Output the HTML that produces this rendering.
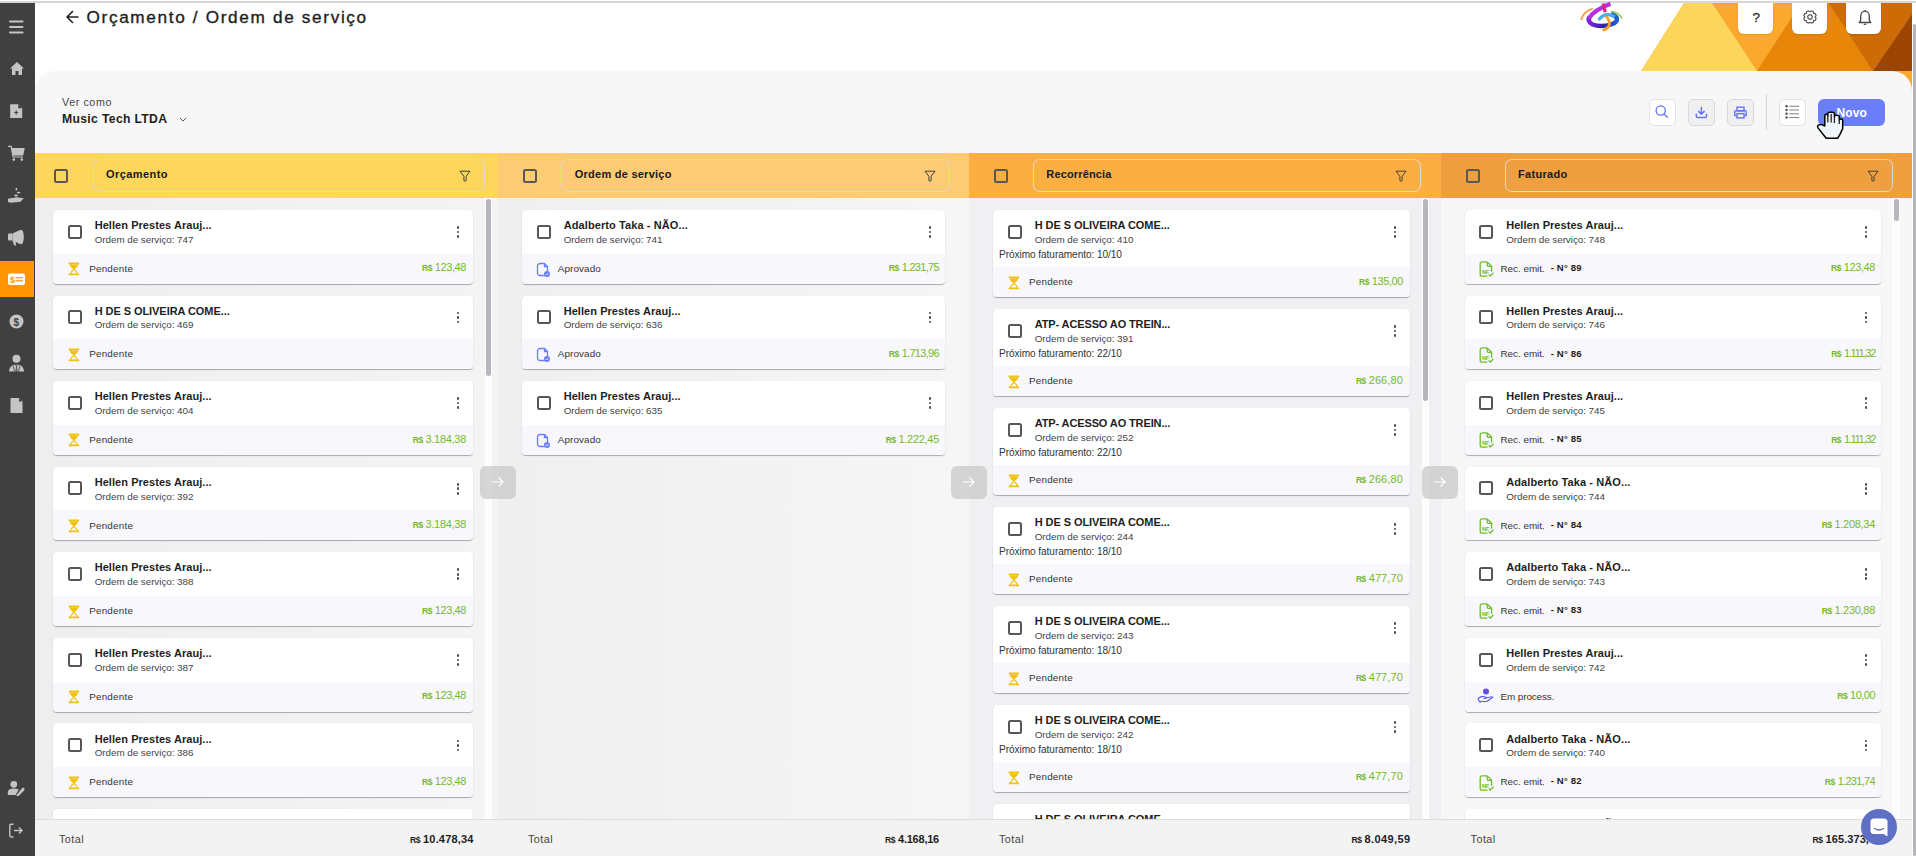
<!DOCTYPE html>
<html><head><meta charset="utf-8"><style>
html,body{margin:0;padding:0;}
body{width:1916px;height:856px;overflow:hidden;position:relative;background:#fff;font-family:"Liberation Sans", sans-serif;}
.t{position:absolute;white-space:nowrap;}
svg{overflow:visible}
</style></head><body>
<div style="position:absolute;left:0px;top:1px;width:1916px;height:2px;background:#d6d6d9"></div>
<svg style="position:absolute;left:0;top:0" width="1916" height="110" viewBox="0 0 1916 110">
<rect x="1640" y="3" width="272" height="97" fill="#FBA92E"/>
<polygon points="1600,3 1684,3 1641,71 1600,71" fill="#fff"/>
<polygon points="1641,71 1684,3 1712,3 1757,71" fill="#FCD55B"/>
<polygon points="1757,71 1801,3 1828.5,3 1872.5,71" fill="#E8860A"/>
<polygon points="1828.5,3 1912,3 1912,14 1873,71 1872.5,71" fill="#CD6C06"/>
<polygon points="1873,71 1912,14 1912,71" fill="#9B4404"/>
</svg>
<div style="position:absolute;left:35px;top:71px;width:1877px;height:785px;background:#f7f7f7;border-radius:20px 20px 0 0"></div>
<div style="position:absolute;left:1912px;top:3px;width:4px;height:853px;background:#fff"></div>
<div style="position:absolute;left:1913px;top:24px;width:3px;height:832px;background:#b4b4ba;border-radius:2px"></div>
<div style="position:absolute;left:0px;top:3px;width:35px;height:853px;background:#404040;z-index:5"></div>
<div style="position:absolute;left:0;top:261px;width:34px;height:36px;background:#FF9600;z-index:6"></div>
<svg style="position:absolute;left:64px;top:10px;" width="16" height="14" viewBox="0 0 16 14"><path d="M3 7 H14 M3 7 L8.5 1.5 M3 7 L8.5 12.5" stroke="#222" stroke-width="1.6" fill="none" stroke-linecap="round"/></svg>
<div class="t" style="left:86.50px;top:8.64px;font-size:17.2px;line-height:17.2px;font-weight:400;color:#1e1e1e;letter-spacing:1.655px;-webkit-text-stroke:0.35px #1e1e1e">Orçamento / Ordem de serviço</div>
<div class="t" style="left:62.00px;top:96.84px;font-size:10.7px;line-height:10.7px;font-weight:400;color:#444;letter-spacing:0.600px;">Ver como</div>
<div class="t" style="left:62.00px;top:112.57px;font-size:12.2px;line-height:12.2px;font-weight:700;color:#1e1e1e;letter-spacing:0.330px;">Music Tech LTDA</div>
<svg style="position:absolute;left:178px;top:115px;" width="10" height="8" viewBox="0 0 10 8"><path d="M2 3 L5 6 L8 3" stroke="#555" stroke-width="1" fill="none"/></svg>
<div style="position:absolute;left:1738px;top:3px;width:35px;height:31px;background:#fff;border-radius:0 0 6px 6px;box-shadow:0 1px 2px rgba(0,0,0,.12)"></div>
<div style="position:absolute;left:1792px;top:3px;width:35px;height:31px;background:#fff;border-radius:0 0 6px 6px;box-shadow:0 1px 2px rgba(0,0,0,.12)"></div>
<div style="position:absolute;left:1846px;top:3px;width:35px;height:31px;background:#fff;border-radius:0 0 6px 6px;box-shadow:0 1px 2px rgba(0,0,0,.12)"></div>
<div style="position:absolute;left:1649px;top:99px;width:25px;height:25px;background:#fff;border:1px solid #e2e2e2;border-radius:5px"></div>
<div style="position:absolute;left:1688px;top:99px;width:25px;height:25px;background:#f0f0f0;border:1px solid #d8d8d8;border-radius:5px"></div>
<div style="position:absolute;left:1727px;top:99px;width:25px;height:25px;background:#f0f0f0;border:1px solid #d8d8d8;border-radius:5px"></div>
<div style="position:absolute;left:1766px;top:94px;width:1px;height:36px;background:#d4d4d4"></div>
<div style="position:absolute;left:1779px;top:99px;width:25px;height:25px;background:#fff;border:1px solid #e2e2e2;border-radius:5px"></div>
<div style="position:absolute;left:1818px;top:99px;width:67px;height:27px;background:#6B7EF9;border-radius:6px"></div>
<div class="t" style="left:1836.50px;top:106.74px;font-size:12px;line-height:12px;font-weight:700;color:#fff;letter-spacing:0.150px;">Novo</div>
<svg style="position:absolute;left:1649px;top:99px;" width="27" height="27" viewBox="0 0 27 27"><circle cx="11.7" cy="11.5" r="4.6" stroke="#6673F6" stroke-width="1.3" fill="none"/><path d="M15 14.8 L18.3 18.2" stroke="#6673F6" stroke-width="1.4" stroke-linecap="round"/></svg>
<svg style="position:absolute;left:1688px;top:99px;" width="27" height="27" viewBox="0 0 27 27"><path d="M13.4 8.2 V15 M10.6 12.4 L13.4 15.2 L16.2 12.4" stroke="#6673F6" stroke-width="1.5" fill="none" stroke-linecap="round" stroke-linejoin="round"/><path d="M8.3 15.3 V17.3 Q8.3 18.6 9.6 18.6 H17.2 Q18.5 18.6 18.5 17.3 V15.3" stroke="#6673F6" stroke-width="1.5" fill="none" stroke-linecap="round"/></svg>
<svg style="position:absolute;left:1727px;top:99px;" width="27" height="27" viewBox="0 0 27 27"><rect x="10" y="8.2" width="7" height="3.8" stroke="#6673F6" stroke-width="1.4" fill="none"/><path d="M9.8 16.5 H7.8 V12.6 Q7.8 11.6 8.8 11.6 H18.2 Q19.2 11.6 19.2 12.6 V16.5 H17.2" stroke="#6673F6" stroke-width="1.4" fill="none"/><rect x="10" y="14.6" width="7" height="4.3" stroke="#6673F6" stroke-width="1.4" fill="none"/></svg>
<svg style="position:absolute;left:1779px;top:99px;" width="27" height="27" viewBox="0 0 27 27"><g fill="#555"><circle cx="7.6" cy="7.3" r="1.2"/><circle cx="7.6" cy="11" r="1.2"/><circle cx="7.6" cy="14.8" r="1.2"/><circle cx="7.6" cy="18.5" r="1.2"/></g><g stroke="#8a8a8a" stroke-width="1.1"><path d="M10.2 7.3 H20"/><path d="M10.2 11 H20"/><path d="M10.2 14.8 H20"/><path d="M10.2 18.5 H20"/></g></svg>
<div class="t" style="left:1752.50px;top:10.57px;font-size:13.5px;line-height:13.5px;font-weight:400;color:#333;-webkit-text-stroke:0.3px #333">?</div>
<svg style="position:absolute;left:1800.3px;top:6.75px;" width="20" height="20" viewBox="0 0 20 20"><g transform="translate(10,10)"><polygon points="5.10,0.00 6.16,1.31 5.28,3.43 3.61,3.61 3.43,5.28 1.31,6.16 0.00,5.10 -1.31,6.16 -3.43,5.28 -3.61,3.61 -5.28,3.43 -6.16,1.31 -5.10,0.00 -6.16,-1.31 -5.28,-3.43 -3.61,-3.61 -3.43,-5.28 -1.31,-6.16 -0.00,-5.10 1.31,-6.16 3.43,-5.28 3.61,-3.61 5.28,-3.43 6.16,-1.31" stroke="#505050" stroke-width="1.15" fill="none" stroke-linejoin="round"/><rect x="-2.2" y="-2.2" width="4.4" height="4.4" rx="1.6" stroke="#505050" stroke-width="1.2" fill="none"/></g></svg>
<svg style="position:absolute;left:1856px;top:8px;" width="18" height="18" viewBox="0 0 18 18"><path d="M3.2 14.5 H14.8 L13.3 12.3 V8.5 C13.3 5.6 11.5 3.2 9 3.2 C6.5 3.2 4.7 5.6 4.7 8.5 V12.3 Z" stroke="#444" stroke-width="1.3" fill="none" stroke-linejoin="round"/><path d="M9 2 V3.2 M7.8 15.8 Q9 17 10.2 15.8" stroke="#444" stroke-width="1.2" fill="none"/></svg>
<svg style="position:absolute;left:1816px;top:111px;" width="30" height="30" viewBox="0 0 30 30"><path d="M8.8 15 V5 Q8.8 3.3 10.3 3.3 Q11.8 3.3 11.8 5 V3 Q11.8 1.3 13.6 1.3 H16.6 Q18.4 1.3 18.4 3 V5.5 Q18.4 4.2 20.6 4.2 Q23.3 4.2 23.3 6 V9 Q23.3 7.9 25 7.9 Q26.7 7.9 26.7 9.6 V17.6 L23.8 23.6 L21.8 27.2 H10.2 L1.8 16.6 Q1 15.2 2.4 14.2 Q4 13.2 6.4 13.8 Z" fill="#eef6fb" stroke="#000" stroke-width="1.5" stroke-linejoin="round"/><path d="M11.8 5 V11.5 M15.2 3 V11.5 M18.4 5.5 V12 M23.3 9 V13" stroke="#222" stroke-width="1.3"/></svg>
<div style="position:absolute;left:27px;top:198px;width:471px;height:621px;background:linear-gradient(to right,#eeeeee,#f4f4f4)"></div>
<div style="position:absolute;left:27px;top:153px;width:471px;height:45px;background:#FDD65C"></div>
<div style="position:absolute;left:54px;top:169px;width:10px;height:10px;border:2px solid #575757;border-radius:2.5px"></div>
<div style="position:absolute;left:93px;top:159px;width:390px;height:30.5px;border:1.5px solid #dcdad4;border-radius:6.5px"></div>
<div class="t" style="left:106.00px;top:168.89px;font-size:11px;line-height:11px;font-weight:700;color:#1a1a1a;letter-spacing:0.436px;">Orçamento</div>
<svg style="position:absolute;left:458.8px;top:169.5px;" width="12" height="12" viewBox="0 0 12 12"><path d="M1 1.2 H11 L7.1 6.3 V10.3 Q7.1 11.2 6.2 11.2 H5.8 Q4.9 11.2 4.9 10.3 V6.3 Z" stroke="#3a3a3a" stroke-width="0.95" fill="none" stroke-linejoin="round"/></svg>
<div style="position:absolute;left:498px;top:198px;width:471px;height:621px;background:linear-gradient(to right,#efefef,#f6f6f6)"></div>
<div style="position:absolute;left:498px;top:153px;width:471px;height:45px;background:#FDCB74"></div>
<div style="position:absolute;left:523px;top:169px;width:10px;height:10px;border:2px solid #575757;border-radius:2.5px"></div>
<div style="position:absolute;left:561.4px;top:159px;width:386.20000000000005px;height:30.5px;border:1.5px solid #dcdad4;border-radius:6.5px"></div>
<div class="t" style="left:574.70px;top:168.89px;font-size:11px;line-height:11px;font-weight:700;color:#1a1a1a;letter-spacing:0.254px;">Ordem de serviço</div>
<svg style="position:absolute;left:923.6px;top:169.5px;" width="12" height="12" viewBox="0 0 12 12"><path d="M1 1.2 H11 L7.1 6.3 V10.3 Q7.1 11.2 6.2 11.2 H5.8 Q4.9 11.2 4.9 10.3 V6.3 Z" stroke="#3a3a3a" stroke-width="0.95" fill="none" stroke-linejoin="round"/></svg>
<div style="position:absolute;left:969px;top:198px;width:472px;height:621px;background:#f0f0f2"></div>
<div style="position:absolute;left:969px;top:153px;width:472px;height:45px;background:#FBAF42"></div>
<div style="position:absolute;left:994px;top:169px;width:10px;height:10px;border:2px solid #575757;border-radius:2.5px"></div>
<div style="position:absolute;left:1033px;top:159px;width:386.4000000000001px;height:30.5px;border:1.5px solid #dcdad4;border-radius:6.5px"></div>
<div class="t" style="left:1046.30px;top:168.89px;font-size:11px;line-height:11px;font-weight:700;color:#1a1a1a;letter-spacing:0.156px;">Recorrência</div>
<svg style="position:absolute;left:1395px;top:169.5px;" width="12" height="12" viewBox="0 0 12 12"><path d="M1 1.2 H11 L7.1 6.3 V10.3 Q7.1 11.2 6.2 11.2 H5.8 Q4.9 11.2 4.9 10.3 V6.3 Z" stroke="#3a3a3a" stroke-width="0.95" fill="none" stroke-linejoin="round"/></svg>
<div style="position:absolute;left:1441px;top:198px;width:471px;height:621px;background:#f7f7f7"></div>
<div style="position:absolute;left:1441px;top:153px;width:471px;height:45px;background:#EEA03E"></div>
<div style="position:absolute;left:1466px;top:169px;width:10px;height:10px;border:2px solid #575757;border-radius:2.5px"></div>
<div style="position:absolute;left:1505px;top:159px;width:386px;height:30.5px;border:1.5px solid #dcdad4;border-radius:6.5px"></div>
<div class="t" style="left:1518.00px;top:168.89px;font-size:11px;line-height:11px;font-weight:700;color:#1a1a1a;letter-spacing:0.305px;">Faturado</div>
<svg style="position:absolute;left:1866.5px;top:169.5px;" width="12" height="12" viewBox="0 0 12 12"><path d="M1 1.2 H11 L7.1 6.3 V10.3 Q7.1 11.2 6.2 11.2 H5.8 Q4.9 11.2 4.9 10.3 V6.3 Z" stroke="#3a3a3a" stroke-width="0.95" fill="none" stroke-linejoin="round"/></svg>
<div style="position:absolute;left:53px;top:210.00px;width:420px;height:73.67px;background:#fff;border-radius:4px;box-shadow:0 1px 1px rgba(0,0,0,.3),0 0 1px rgba(0,0,0,.1);overflow:hidden"><div style="position:absolute;left:0;right:0;top:43.67px;bottom:0;background:#f8f8fc"></div></div>
<div style="position:absolute;left:67.9px;top:224.7px;width:10px;height:10px;border:2px solid #575757;border-radius:2.5px"></div>
<div class="t" style="left:94.70px;top:220.09px;font-size:11px;line-height:11px;font-weight:700;color:#1e1e1e;letter-spacing:0.054px;">Hellen Prestes Arauj...</div>
<div class="t" style="left:94.70px;top:234.82px;font-size:9.9px;line-height:9.9px;font-weight:400;color:#444;letter-spacing:-0.057px;">Ordem de serviço: 747</div>
<div style="position:absolute;left:456.65px;top:226.15px;width:2.7px;height:2.7px;background:#4a4a4a;border-radius:50%"></div>
<div style="position:absolute;left:456.65px;top:230.65px;width:2.7px;height:2.7px;background:#4a4a4a;border-radius:50%"></div>
<div style="position:absolute;left:456.65px;top:235.15px;width:2.7px;height:2.7px;background:#4a4a4a;border-radius:50%"></div>
<svg style="position:absolute;left:67.8px;top:262.27000000000004px;" width="12" height="14" viewBox="0 0 12 14"><rect x="0.6" y="0.6" width="10.6" height="1.9" rx="0.6" fill="#F0C20C"/><path d="M1.6 2.4 H10.2 C10 4.5 8 6 5.9 7.6 C3.8 6 1.8 4.5 1.6 2.4 Z" fill="#F0C20C"/><path d="M5.9 7.4 C4 8.5 2.6 10 2.3 12.2 M5.9 7.4 C7.8 8.5 9.2 10 9.5 12.2" stroke="#F0C20C" stroke-width="1.2" fill="none"/><rect x="0.6" y="11.6" width="10.6" height="1.7" rx="0.5" fill="#F0C20C"/></svg>
<div class="t" style="left:89.20px;top:263.79px;font-size:9.9px;line-height:9.9px;font-weight:400;color:#333;letter-spacing:0.201px;">Pendente</div>
<div class="t" style="right:1450.00px;top:262.46px;font-size:11px;line-height:11px;color:#76B82A"><span style="font-size:8.5px;font-weight:700;letter-spacing:-0.45px">R$</span><span style="font-weight:400;letter-spacing:-0.404px;margin-left:2.8px">123,48</span></div>
<div style="position:absolute;left:53px;top:295.57px;width:420px;height:73.67px;background:#fff;border-radius:4px;box-shadow:0 1px 1px rgba(0,0,0,.3),0 0 1px rgba(0,0,0,.1);overflow:hidden"><div style="position:absolute;left:0;right:0;top:43.67px;bottom:0;background:#f8f8fc"></div></div>
<div style="position:absolute;left:67.9px;top:310.27px;width:10px;height:10px;border:2px solid #575757;border-radius:2.5px"></div>
<div class="t" style="left:94.70px;top:305.66px;font-size:11px;line-height:11px;font-weight:700;color:#1e1e1e;letter-spacing:-0.065px;">H DE S OLIVEIRA COME...</div>
<div class="t" style="left:94.70px;top:320.39px;font-size:9.9px;line-height:9.9px;font-weight:400;color:#444;letter-spacing:-0.057px;">Ordem de serviço: 469</div>
<div style="position:absolute;left:456.65px;top:311.71999999999997px;width:2.7px;height:2.7px;background:#4a4a4a;border-radius:50%"></div>
<div style="position:absolute;left:456.65px;top:316.21999999999997px;width:2.7px;height:2.7px;background:#4a4a4a;border-radius:50%"></div>
<div style="position:absolute;left:456.65px;top:320.71999999999997px;width:2.7px;height:2.7px;background:#4a4a4a;border-radius:50%"></div>
<svg style="position:absolute;left:67.8px;top:347.84000000000003px;" width="12" height="14" viewBox="0 0 12 14"><rect x="0.6" y="0.6" width="10.6" height="1.9" rx="0.6" fill="#F0C20C"/><path d="M1.6 2.4 H10.2 C10 4.5 8 6 5.9 7.6 C3.8 6 1.8 4.5 1.6 2.4 Z" fill="#F0C20C"/><path d="M5.9 7.4 C4 8.5 2.6 10 2.3 12.2 M5.9 7.4 C7.8 8.5 9.2 10 9.5 12.2" stroke="#F0C20C" stroke-width="1.2" fill="none"/><rect x="0.6" y="11.6" width="10.6" height="1.7" rx="0.5" fill="#F0C20C"/></svg>
<div class="t" style="left:89.20px;top:349.36px;font-size:9.9px;line-height:9.9px;font-weight:400;color:#333;letter-spacing:0.201px;">Pendente</div>
<div style="position:absolute;left:53px;top:381.14px;width:420px;height:73.67px;background:#fff;border-radius:4px;box-shadow:0 1px 1px rgba(0,0,0,.3),0 0 1px rgba(0,0,0,.1);overflow:hidden"><div style="position:absolute;left:0;right:0;top:43.67px;bottom:0;background:#f8f8fc"></div></div>
<div style="position:absolute;left:67.9px;top:395.84px;width:10px;height:10px;border:2px solid #575757;border-radius:2.5px"></div>
<div class="t" style="left:94.70px;top:391.23px;font-size:11px;line-height:11px;font-weight:700;color:#1e1e1e;letter-spacing:0.054px;">Hellen Prestes Arauj...</div>
<div class="t" style="left:94.70px;top:405.96px;font-size:9.9px;line-height:9.9px;font-weight:400;color:#444;letter-spacing:-0.057px;">Ordem de serviço: 404</div>
<div style="position:absolute;left:456.65px;top:397.28999999999996px;width:2.7px;height:2.7px;background:#4a4a4a;border-radius:50%"></div>
<div style="position:absolute;left:456.65px;top:401.78999999999996px;width:2.7px;height:2.7px;background:#4a4a4a;border-radius:50%"></div>
<div style="position:absolute;left:456.65px;top:406.28999999999996px;width:2.7px;height:2.7px;background:#4a4a4a;border-radius:50%"></div>
<svg style="position:absolute;left:67.8px;top:433.41px;" width="12" height="14" viewBox="0 0 12 14"><rect x="0.6" y="0.6" width="10.6" height="1.9" rx="0.6" fill="#F0C20C"/><path d="M1.6 2.4 H10.2 C10 4.5 8 6 5.9 7.6 C3.8 6 1.8 4.5 1.6 2.4 Z" fill="#F0C20C"/><path d="M5.9 7.4 C4 8.5 2.6 10 2.3 12.2 M5.9 7.4 C7.8 8.5 9.2 10 9.5 12.2" stroke="#F0C20C" stroke-width="1.2" fill="none"/><rect x="0.6" y="11.6" width="10.6" height="1.7" rx="0.5" fill="#F0C20C"/></svg>
<div class="t" style="left:89.20px;top:434.93px;font-size:9.9px;line-height:9.9px;font-weight:400;color:#333;letter-spacing:0.201px;">Pendente</div>
<div class="t" style="right:1450.00px;top:433.60px;font-size:11px;line-height:11px;color:#76B82A"><span style="font-size:8.5px;font-weight:700;letter-spacing:-0.45px">R$</span><span style="font-weight:400;letter-spacing:-0.291px;margin-left:2.8px">3.184,38</span></div>
<div style="position:absolute;left:53px;top:466.71px;width:420px;height:73.67px;background:#fff;border-radius:4px;box-shadow:0 1px 1px rgba(0,0,0,.3),0 0 1px rgba(0,0,0,.1);overflow:hidden"><div style="position:absolute;left:0;right:0;top:43.67px;bottom:0;background:#f8f8fc"></div></div>
<div style="position:absolute;left:67.9px;top:481.40999999999997px;width:10px;height:10px;border:2px solid #575757;border-radius:2.5px"></div>
<div class="t" style="left:94.70px;top:476.80px;font-size:11px;line-height:11px;font-weight:700;color:#1e1e1e;letter-spacing:0.054px;">Hellen Prestes Arauj...</div>
<div class="t" style="left:94.70px;top:491.53px;font-size:9.9px;line-height:9.9px;font-weight:400;color:#444;letter-spacing:-0.057px;">Ordem de serviço: 392</div>
<div style="position:absolute;left:456.65px;top:482.85999999999996px;width:2.7px;height:2.7px;background:#4a4a4a;border-radius:50%"></div>
<div style="position:absolute;left:456.65px;top:487.35999999999996px;width:2.7px;height:2.7px;background:#4a4a4a;border-radius:50%"></div>
<div style="position:absolute;left:456.65px;top:491.85999999999996px;width:2.7px;height:2.7px;background:#4a4a4a;border-radius:50%"></div>
<svg style="position:absolute;left:67.8px;top:518.98px;" width="12" height="14" viewBox="0 0 12 14"><rect x="0.6" y="0.6" width="10.6" height="1.9" rx="0.6" fill="#F0C20C"/><path d="M1.6 2.4 H10.2 C10 4.5 8 6 5.9 7.6 C3.8 6 1.8 4.5 1.6 2.4 Z" fill="#F0C20C"/><path d="M5.9 7.4 C4 8.5 2.6 10 2.3 12.2 M5.9 7.4 C7.8 8.5 9.2 10 9.5 12.2" stroke="#F0C20C" stroke-width="1.2" fill="none"/><rect x="0.6" y="11.6" width="10.6" height="1.7" rx="0.5" fill="#F0C20C"/></svg>
<div class="t" style="left:89.20px;top:520.50px;font-size:9.9px;line-height:9.9px;font-weight:400;color:#333;letter-spacing:0.201px;">Pendente</div>
<div class="t" style="right:1450.00px;top:519.17px;font-size:11px;line-height:11px;color:#76B82A"><span style="font-size:8.5px;font-weight:700;letter-spacing:-0.45px">R$</span><span style="font-weight:400;letter-spacing:-0.291px;margin-left:2.8px">3.184,38</span></div>
<div style="position:absolute;left:53px;top:552.28px;width:420px;height:73.67px;background:#fff;border-radius:4px;box-shadow:0 1px 1px rgba(0,0,0,.3),0 0 1px rgba(0,0,0,.1);overflow:hidden"><div style="position:absolute;left:0;right:0;top:43.67px;bottom:0;background:#f8f8fc"></div></div>
<div style="position:absolute;left:67.9px;top:566.98px;width:10px;height:10px;border:2px solid #575757;border-radius:2.5px"></div>
<div class="t" style="left:94.70px;top:562.37px;font-size:11px;line-height:11px;font-weight:700;color:#1e1e1e;letter-spacing:0.054px;">Hellen Prestes Arauj...</div>
<div class="t" style="left:94.70px;top:577.10px;font-size:9.9px;line-height:9.9px;font-weight:400;color:#444;letter-spacing:-0.057px;">Ordem de serviço: 388</div>
<div style="position:absolute;left:456.65px;top:568.43px;width:2.7px;height:2.7px;background:#4a4a4a;border-radius:50%"></div>
<div style="position:absolute;left:456.65px;top:572.93px;width:2.7px;height:2.7px;background:#4a4a4a;border-radius:50%"></div>
<div style="position:absolute;left:456.65px;top:577.43px;width:2.7px;height:2.7px;background:#4a4a4a;border-radius:50%"></div>
<svg style="position:absolute;left:67.8px;top:604.55px;" width="12" height="14" viewBox="0 0 12 14"><rect x="0.6" y="0.6" width="10.6" height="1.9" rx="0.6" fill="#F0C20C"/><path d="M1.6 2.4 H10.2 C10 4.5 8 6 5.9 7.6 C3.8 6 1.8 4.5 1.6 2.4 Z" fill="#F0C20C"/><path d="M5.9 7.4 C4 8.5 2.6 10 2.3 12.2 M5.9 7.4 C7.8 8.5 9.2 10 9.5 12.2" stroke="#F0C20C" stroke-width="1.2" fill="none"/><rect x="0.6" y="11.6" width="10.6" height="1.7" rx="0.5" fill="#F0C20C"/></svg>
<div class="t" style="left:89.20px;top:606.07px;font-size:9.9px;line-height:9.9px;font-weight:400;color:#333;letter-spacing:0.201px;">Pendente</div>
<div class="t" style="right:1450.00px;top:604.74px;font-size:11px;line-height:11px;color:#76B82A"><span style="font-size:8.5px;font-weight:700;letter-spacing:-0.45px">R$</span><span style="font-weight:400;letter-spacing:-0.404px;margin-left:2.8px">123,48</span></div>
<div style="position:absolute;left:53px;top:637.85px;width:420px;height:73.67px;background:#fff;border-radius:4px;box-shadow:0 1px 1px rgba(0,0,0,.3),0 0 1px rgba(0,0,0,.1);overflow:hidden"><div style="position:absolute;left:0;right:0;top:43.67px;bottom:0;background:#f8f8fc"></div></div>
<div style="position:absolute;left:67.9px;top:652.55px;width:10px;height:10px;border:2px solid #575757;border-radius:2.5px"></div>
<div class="t" style="left:94.70px;top:647.94px;font-size:11px;line-height:11px;font-weight:700;color:#1e1e1e;letter-spacing:0.054px;">Hellen Prestes Arauj...</div>
<div class="t" style="left:94.70px;top:662.67px;font-size:9.9px;line-height:9.9px;font-weight:400;color:#444;letter-spacing:-0.057px;">Ordem de serviço: 387</div>
<div style="position:absolute;left:456.65px;top:653.9999999999999px;width:2.7px;height:2.7px;background:#4a4a4a;border-radius:50%"></div>
<div style="position:absolute;left:456.65px;top:658.4999999999999px;width:2.7px;height:2.7px;background:#4a4a4a;border-radius:50%"></div>
<div style="position:absolute;left:456.65px;top:662.9999999999999px;width:2.7px;height:2.7px;background:#4a4a4a;border-radius:50%"></div>
<svg style="position:absolute;left:67.8px;top:690.1199999999999px;" width="12" height="14" viewBox="0 0 12 14"><rect x="0.6" y="0.6" width="10.6" height="1.9" rx="0.6" fill="#F0C20C"/><path d="M1.6 2.4 H10.2 C10 4.5 8 6 5.9 7.6 C3.8 6 1.8 4.5 1.6 2.4 Z" fill="#F0C20C"/><path d="M5.9 7.4 C4 8.5 2.6 10 2.3 12.2 M5.9 7.4 C7.8 8.5 9.2 10 9.5 12.2" stroke="#F0C20C" stroke-width="1.2" fill="none"/><rect x="0.6" y="11.6" width="10.6" height="1.7" rx="0.5" fill="#F0C20C"/></svg>
<div class="t" style="left:89.20px;top:691.64px;font-size:9.9px;line-height:9.9px;font-weight:400;color:#333;letter-spacing:0.201px;">Pendente</div>
<div class="t" style="right:1450.00px;top:690.31px;font-size:11px;line-height:11px;color:#76B82A"><span style="font-size:8.5px;font-weight:700;letter-spacing:-0.45px">R$</span><span style="font-weight:400;letter-spacing:-0.404px;margin-left:2.8px">123,48</span></div>
<div style="position:absolute;left:53px;top:723.42px;width:420px;height:73.67px;background:#fff;border-radius:4px;box-shadow:0 1px 1px rgba(0,0,0,.3),0 0 1px rgba(0,0,0,.1);overflow:hidden"><div style="position:absolute;left:0;right:0;top:43.67px;bottom:0;background:#f8f8fc"></div></div>
<div style="position:absolute;left:67.9px;top:738.12px;width:10px;height:10px;border:2px solid #575757;border-radius:2.5px"></div>
<div class="t" style="left:94.70px;top:733.51px;font-size:11px;line-height:11px;font-weight:700;color:#1e1e1e;letter-spacing:0.054px;">Hellen Prestes Arauj...</div>
<div class="t" style="left:94.70px;top:748.24px;font-size:9.9px;line-height:9.9px;font-weight:400;color:#444;letter-spacing:-0.057px;">Ordem de serviço: 386</div>
<div style="position:absolute;left:456.65px;top:739.5699999999999px;width:2.7px;height:2.7px;background:#4a4a4a;border-radius:50%"></div>
<div style="position:absolute;left:456.65px;top:744.0699999999999px;width:2.7px;height:2.7px;background:#4a4a4a;border-radius:50%"></div>
<div style="position:absolute;left:456.65px;top:748.5699999999999px;width:2.7px;height:2.7px;background:#4a4a4a;border-radius:50%"></div>
<svg style="position:absolute;left:67.8px;top:775.6899999999999px;" width="12" height="14" viewBox="0 0 12 14"><rect x="0.6" y="0.6" width="10.6" height="1.9" rx="0.6" fill="#F0C20C"/><path d="M1.6 2.4 H10.2 C10 4.5 8 6 5.9 7.6 C3.8 6 1.8 4.5 1.6 2.4 Z" fill="#F0C20C"/><path d="M5.9 7.4 C4 8.5 2.6 10 2.3 12.2 M5.9 7.4 C7.8 8.5 9.2 10 9.5 12.2" stroke="#F0C20C" stroke-width="1.2" fill="none"/><rect x="0.6" y="11.6" width="10.6" height="1.7" rx="0.5" fill="#F0C20C"/></svg>
<div class="t" style="left:89.20px;top:777.21px;font-size:9.9px;line-height:9.9px;font-weight:400;color:#333;letter-spacing:0.201px;">Pendente</div>
<div class="t" style="right:1450.00px;top:775.88px;font-size:11px;line-height:11px;color:#76B82A"><span style="font-size:8.5px;font-weight:700;letter-spacing:-0.45px">R$</span><span style="font-weight:400;letter-spacing:-0.404px;margin-left:2.8px">123,48</span></div>
<div style="position:absolute;left:53px;top:808.99px;width:420px;height:73.67px;background:#fff;border-radius:4px;box-shadow:0 1px 1px rgba(0,0,0,.3),0 0 1px rgba(0,0,0,.1);overflow:hidden"><div style="position:absolute;left:0;right:0;top:43.67px;bottom:0;background:#f8f8fc"></div></div>
<div style="position:absolute;left:522px;top:210.00px;width:423px;height:73.67px;background:#fff;border-radius:4px;box-shadow:0 1px 1px rgba(0,0,0,.3),0 0 1px rgba(0,0,0,.1);overflow:hidden"><div style="position:absolute;left:0;right:0;top:43.67px;bottom:0;background:#f8f8fc"></div></div>
<div style="position:absolute;left:536.9px;top:224.7px;width:10px;height:10px;border:2px solid #575757;border-radius:2.5px"></div>
<div class="t" style="left:563.70px;top:220.09px;font-size:11px;line-height:11px;font-weight:700;color:#1e1e1e;letter-spacing:0.098px;">Adalberto Taka - NÃO...</div>
<div class="t" style="left:563.70px;top:234.82px;font-size:9.9px;line-height:9.9px;font-weight:400;color:#444;letter-spacing:-0.057px;">Ordem de serviço: 741</div>
<div style="position:absolute;left:928.65px;top:226.15px;width:2.7px;height:2.7px;background:#4a4a4a;border-radius:50%"></div>
<div style="position:absolute;left:928.65px;top:230.65px;width:2.7px;height:2.7px;background:#4a4a4a;border-radius:50%"></div>
<div style="position:absolute;left:928.65px;top:235.15px;width:2.7px;height:2.7px;background:#4a4a4a;border-radius:50%"></div>
<svg style="position:absolute;left:536px;top:261.67px;" width="15" height="16" viewBox="0 0 15 16"><path d="M4 1.5 H8.5 L11.5 4.5 V9.5 M8.5 1.5 V4.5 H11.5 M9 13.5 H4 A2.5 2.5 0 0 1 1.5 11 V4 A2.5 2.5 0 0 1 4 1.5" stroke="#6B7EF9" stroke-width="1.3" fill="none"/><circle cx="11" cy="12" r="3" fill="#6B7EF9"/><path d="M9.6 12 L10.6 13 L12.4 11.2" stroke="#fff" stroke-width="0.9" fill="none"/></svg>
<div class="t" style="left:557.70px;top:263.79px;font-size:9.9px;line-height:9.9px;font-weight:400;color:#333;letter-spacing:0.128px;">Aprovado</div>
<div class="t" style="right:977.00px;top:262.46px;font-size:11px;line-height:11px;color:#76B82A"><span style="font-size:8.5px;font-weight:700;letter-spacing:-0.45px">R$</span><span style="font-weight:400;letter-spacing:-0.682px;margin-left:2.8px">1.231,75</span></div>
<div style="position:absolute;left:522px;top:295.57px;width:423px;height:73.67px;background:#fff;border-radius:4px;box-shadow:0 1px 1px rgba(0,0,0,.3),0 0 1px rgba(0,0,0,.1);overflow:hidden"><div style="position:absolute;left:0;right:0;top:43.67px;bottom:0;background:#f8f8fc"></div></div>
<div style="position:absolute;left:536.9px;top:310.27px;width:10px;height:10px;border:2px solid #575757;border-radius:2.5px"></div>
<div class="t" style="left:563.70px;top:305.66px;font-size:11px;line-height:11px;font-weight:700;color:#1e1e1e;letter-spacing:0.054px;">Hellen Prestes Arauj...</div>
<div class="t" style="left:563.70px;top:320.39px;font-size:9.9px;line-height:9.9px;font-weight:400;color:#444;letter-spacing:-0.057px;">Ordem de serviço: 636</div>
<div style="position:absolute;left:928.65px;top:311.71999999999997px;width:2.7px;height:2.7px;background:#4a4a4a;border-radius:50%"></div>
<div style="position:absolute;left:928.65px;top:316.21999999999997px;width:2.7px;height:2.7px;background:#4a4a4a;border-radius:50%"></div>
<div style="position:absolute;left:928.65px;top:320.71999999999997px;width:2.7px;height:2.7px;background:#4a4a4a;border-radius:50%"></div>
<svg style="position:absolute;left:536px;top:347.24px;" width="15" height="16" viewBox="0 0 15 16"><path d="M4 1.5 H8.5 L11.5 4.5 V9.5 M8.5 1.5 V4.5 H11.5 M9 13.5 H4 A2.5 2.5 0 0 1 1.5 11 V4 A2.5 2.5 0 0 1 4 1.5" stroke="#6B7EF9" stroke-width="1.3" fill="none"/><circle cx="11" cy="12" r="3" fill="#6B7EF9"/><path d="M9.6 12 L10.6 13 L12.4 11.2" stroke="#fff" stroke-width="0.9" fill="none"/></svg>
<div class="t" style="left:557.70px;top:349.36px;font-size:9.9px;line-height:9.9px;font-weight:400;color:#333;letter-spacing:0.128px;">Aprovado</div>
<div class="t" style="right:977.00px;top:348.03px;font-size:11px;line-height:11px;color:#76B82A"><span style="font-size:8.5px;font-weight:700;letter-spacing:-0.45px">R$</span><span style="font-weight:400;letter-spacing:-0.682px;margin-left:2.8px">1.713,96</span></div>
<div style="position:absolute;left:522px;top:381.14px;width:423px;height:73.67px;background:#fff;border-radius:4px;box-shadow:0 1px 1px rgba(0,0,0,.3),0 0 1px rgba(0,0,0,.1);overflow:hidden"><div style="position:absolute;left:0;right:0;top:43.67px;bottom:0;background:#f8f8fc"></div></div>
<div style="position:absolute;left:536.9px;top:395.84px;width:10px;height:10px;border:2px solid #575757;border-radius:2.5px"></div>
<div class="t" style="left:563.70px;top:391.23px;font-size:11px;line-height:11px;font-weight:700;color:#1e1e1e;letter-spacing:0.054px;">Hellen Prestes Arauj...</div>
<div class="t" style="left:563.70px;top:405.96px;font-size:9.9px;line-height:9.9px;font-weight:400;color:#444;letter-spacing:-0.057px;">Ordem de serviço: 635</div>
<div style="position:absolute;left:928.65px;top:397.28999999999996px;width:2.7px;height:2.7px;background:#4a4a4a;border-radius:50%"></div>
<div style="position:absolute;left:928.65px;top:401.78999999999996px;width:2.7px;height:2.7px;background:#4a4a4a;border-radius:50%"></div>
<div style="position:absolute;left:928.65px;top:406.28999999999996px;width:2.7px;height:2.7px;background:#4a4a4a;border-radius:50%"></div>
<svg style="position:absolute;left:536px;top:432.81px;" width="15" height="16" viewBox="0 0 15 16"><path d="M4 1.5 H8.5 L11.5 4.5 V9.5 M8.5 1.5 V4.5 H11.5 M9 13.5 H4 A2.5 2.5 0 0 1 1.5 11 V4 A2.5 2.5 0 0 1 4 1.5" stroke="#6B7EF9" stroke-width="1.3" fill="none"/><circle cx="11" cy="12" r="3" fill="#6B7EF9"/><path d="M9.6 12 L10.6 13 L12.4 11.2" stroke="#fff" stroke-width="0.9" fill="none"/></svg>
<div class="t" style="left:557.70px;top:434.93px;font-size:9.9px;line-height:9.9px;font-weight:400;color:#333;letter-spacing:0.128px;">Aprovado</div>
<div class="t" style="right:977.00px;top:433.60px;font-size:11px;line-height:11px;color:#76B82A"><span style="font-size:8.5px;font-weight:700;letter-spacing:-0.45px">R$</span><span style="font-weight:400;letter-spacing:-0.291px;margin-left:2.8px">1.222,45</span></div>
<div style="position:absolute;left:993px;top:210.00px;width:417px;height:87px;background:#fff;border-radius:4px;box-shadow:0 1px 1px rgba(0,0,0,.3),0 0 1px rgba(0,0,0,.1);overflow:hidden"><div style="position:absolute;left:0;right:0;top:57px;bottom:0;background:#f8f8fc"></div></div>
<div style="position:absolute;left:1007.9px;top:224.7px;width:10px;height:10px;border:2px solid #575757;border-radius:2.5px"></div>
<div class="t" style="left:1034.70px;top:220.09px;font-size:11px;line-height:11px;font-weight:700;color:#1e1e1e;letter-spacing:-0.065px;">H DE S OLIVEIRA COME...</div>
<div class="t" style="left:1034.70px;top:234.82px;font-size:9.9px;line-height:9.9px;font-weight:400;color:#444;letter-spacing:-0.057px;">Ordem de serviço: 410</div>
<div style="position:absolute;left:1393.65px;top:226.15px;width:2.7px;height:2.7px;background:#4a4a4a;border-radius:50%"></div>
<div style="position:absolute;left:1393.65px;top:230.65px;width:2.7px;height:2.7px;background:#4a4a4a;border-radius:50%"></div>
<div style="position:absolute;left:1393.65px;top:235.15px;width:2.7px;height:2.7px;background:#4a4a4a;border-radius:50%"></div>
<div class="t" style="left:999.00px;top:249.65px;font-size:10.1px;line-height:10.1px;font-weight:400;color:#333;letter-spacing:-0.063px;">Próximo faturamento: 10/10</div>
<svg style="position:absolute;left:1007.8px;top:275.6px;" width="12" height="14" viewBox="0 0 12 14"><rect x="0.6" y="0.6" width="10.6" height="1.9" rx="0.6" fill="#F0C20C"/><path d="M1.6 2.4 H10.2 C10 4.5 8 6 5.9 7.6 C3.8 6 1.8 4.5 1.6 2.4 Z" fill="#F0C20C"/><path d="M5.9 7.4 C4 8.5 2.6 10 2.3 12.2 M5.9 7.4 C7.8 8.5 9.2 10 9.5 12.2" stroke="#F0C20C" stroke-width="1.2" fill="none"/><rect x="0.6" y="11.6" width="10.6" height="1.7" rx="0.5" fill="#F0C20C"/></svg>
<div class="t" style="left:1029.00px;top:277.12px;font-size:9.9px;line-height:9.9px;font-weight:400;color:#333;letter-spacing:0.201px;">Pendente</div>
<div class="t" style="right:513.00px;top:275.79px;font-size:11px;line-height:11px;color:#76B82A"><span style="font-size:8.5px;font-weight:700;letter-spacing:-0.45px">R$</span><span style="font-weight:400;letter-spacing:-0.404px;margin-left:2.8px">135,00</span></div>
<div style="position:absolute;left:993px;top:309.00px;width:417px;height:87px;background:#fff;border-radius:4px;box-shadow:0 1px 1px rgba(0,0,0,.3),0 0 1px rgba(0,0,0,.1);overflow:hidden"><div style="position:absolute;left:0;right:0;top:57px;bottom:0;background:#f8f8fc"></div></div>
<div style="position:absolute;left:1007.9px;top:323.7px;width:10px;height:10px;border:2px solid #575757;border-radius:2.5px"></div>
<div class="t" style="left:1034.70px;top:319.09px;font-size:11px;line-height:11px;font-weight:700;color:#1e1e1e;letter-spacing:-0.123px;">ATP- ACESSO AO TREIN...</div>
<div class="t" style="left:1034.70px;top:333.82px;font-size:9.9px;line-height:9.9px;font-weight:400;color:#444;letter-spacing:-0.057px;">Ordem de serviço: 391</div>
<div style="position:absolute;left:1393.65px;top:325.15px;width:2.7px;height:2.7px;background:#4a4a4a;border-radius:50%"></div>
<div style="position:absolute;left:1393.65px;top:329.65px;width:2.7px;height:2.7px;background:#4a4a4a;border-radius:50%"></div>
<div style="position:absolute;left:1393.65px;top:334.15px;width:2.7px;height:2.7px;background:#4a4a4a;border-radius:50%"></div>
<div class="t" style="left:999.00px;top:348.65px;font-size:10.1px;line-height:10.1px;font-weight:400;color:#333;letter-spacing:-0.063px;">Próximo faturamento: 22/10</div>
<svg style="position:absolute;left:1007.8px;top:374.6px;" width="12" height="14" viewBox="0 0 12 14"><rect x="0.6" y="0.6" width="10.6" height="1.9" rx="0.6" fill="#F0C20C"/><path d="M1.6 2.4 H10.2 C10 4.5 8 6 5.9 7.6 C3.8 6 1.8 4.5 1.6 2.4 Z" fill="#F0C20C"/><path d="M5.9 7.4 C4 8.5 2.6 10 2.3 12.2 M5.9 7.4 C7.8 8.5 9.2 10 9.5 12.2" stroke="#F0C20C" stroke-width="1.2" fill="none"/><rect x="0.6" y="11.6" width="10.6" height="1.7" rx="0.5" fill="#F0C20C"/></svg>
<div class="t" style="left:1029.00px;top:376.12px;font-size:9.9px;line-height:9.9px;font-weight:400;color:#333;letter-spacing:0.201px;">Pendente</div>
<div class="t" style="right:513.00px;top:374.79px;font-size:11px;line-height:11px;color:#76B82A"><span style="font-size:8.5px;font-weight:700;letter-spacing:-0.45px">R$</span><span style="font-weight:400;letter-spacing:0.118px;margin-left:2.8px">266,80</span></div>
<div style="position:absolute;left:993px;top:408.00px;width:417px;height:87px;background:#fff;border-radius:4px;box-shadow:0 1px 1px rgba(0,0,0,.3),0 0 1px rgba(0,0,0,.1);overflow:hidden"><div style="position:absolute;left:0;right:0;top:57px;bottom:0;background:#f8f8fc"></div></div>
<div style="position:absolute;left:1007.9px;top:422.7px;width:10px;height:10px;border:2px solid #575757;border-radius:2.5px"></div>
<div class="t" style="left:1034.70px;top:418.09px;font-size:11px;line-height:11px;font-weight:700;color:#1e1e1e;letter-spacing:-0.123px;">ATP- ACESSO AO TREIN...</div>
<div class="t" style="left:1034.70px;top:432.82px;font-size:9.9px;line-height:9.9px;font-weight:400;color:#444;letter-spacing:-0.057px;">Ordem de serviço: 252</div>
<div style="position:absolute;left:1393.65px;top:424.15px;width:2.7px;height:2.7px;background:#4a4a4a;border-radius:50%"></div>
<div style="position:absolute;left:1393.65px;top:428.65px;width:2.7px;height:2.7px;background:#4a4a4a;border-radius:50%"></div>
<div style="position:absolute;left:1393.65px;top:433.15px;width:2.7px;height:2.7px;background:#4a4a4a;border-radius:50%"></div>
<div class="t" style="left:999.00px;top:447.65px;font-size:10.1px;line-height:10.1px;font-weight:400;color:#333;letter-spacing:-0.063px;">Próximo faturamento: 22/10</div>
<svg style="position:absolute;left:1007.8px;top:473.6px;" width="12" height="14" viewBox="0 0 12 14"><rect x="0.6" y="0.6" width="10.6" height="1.9" rx="0.6" fill="#F0C20C"/><path d="M1.6 2.4 H10.2 C10 4.5 8 6 5.9 7.6 C3.8 6 1.8 4.5 1.6 2.4 Z" fill="#F0C20C"/><path d="M5.9 7.4 C4 8.5 2.6 10 2.3 12.2 M5.9 7.4 C7.8 8.5 9.2 10 9.5 12.2" stroke="#F0C20C" stroke-width="1.2" fill="none"/><rect x="0.6" y="11.6" width="10.6" height="1.7" rx="0.5" fill="#F0C20C"/></svg>
<div class="t" style="left:1029.00px;top:475.12px;font-size:9.9px;line-height:9.9px;font-weight:400;color:#333;letter-spacing:0.201px;">Pendente</div>
<div class="t" style="right:513.00px;top:473.79px;font-size:11px;line-height:11px;color:#76B82A"><span style="font-size:8.5px;font-weight:700;letter-spacing:-0.45px">R$</span><span style="font-weight:400;letter-spacing:0.118px;margin-left:2.8px">266,80</span></div>
<div style="position:absolute;left:993px;top:507.00px;width:417px;height:87px;background:#fff;border-radius:4px;box-shadow:0 1px 1px rgba(0,0,0,.3),0 0 1px rgba(0,0,0,.1);overflow:hidden"><div style="position:absolute;left:0;right:0;top:57px;bottom:0;background:#f8f8fc"></div></div>
<div style="position:absolute;left:1007.9px;top:521.7px;width:10px;height:10px;border:2px solid #575757;border-radius:2.5px"></div>
<div class="t" style="left:1034.70px;top:517.09px;font-size:11px;line-height:11px;font-weight:700;color:#1e1e1e;letter-spacing:-0.065px;">H DE S OLIVEIRA COME...</div>
<div class="t" style="left:1034.70px;top:531.82px;font-size:9.9px;line-height:9.9px;font-weight:400;color:#444;letter-spacing:-0.057px;">Ordem de serviço: 244</div>
<div style="position:absolute;left:1393.65px;top:523.15px;width:2.7px;height:2.7px;background:#4a4a4a;border-radius:50%"></div>
<div style="position:absolute;left:1393.65px;top:527.65px;width:2.7px;height:2.7px;background:#4a4a4a;border-radius:50%"></div>
<div style="position:absolute;left:1393.65px;top:532.15px;width:2.7px;height:2.7px;background:#4a4a4a;border-radius:50%"></div>
<div class="t" style="left:999.00px;top:546.65px;font-size:10.1px;line-height:10.1px;font-weight:400;color:#333;letter-spacing:-0.063px;">Próximo faturamento: 18/10</div>
<svg style="position:absolute;left:1007.8px;top:572.6px;" width="12" height="14" viewBox="0 0 12 14"><rect x="0.6" y="0.6" width="10.6" height="1.9" rx="0.6" fill="#F0C20C"/><path d="M1.6 2.4 H10.2 C10 4.5 8 6 5.9 7.6 C3.8 6 1.8 4.5 1.6 2.4 Z" fill="#F0C20C"/><path d="M5.9 7.4 C4 8.5 2.6 10 2.3 12.2 M5.9 7.4 C7.8 8.5 9.2 10 9.5 12.2" stroke="#F0C20C" stroke-width="1.2" fill="none"/><rect x="0.6" y="11.6" width="10.6" height="1.7" rx="0.5" fill="#F0C20C"/></svg>
<div class="t" style="left:1029.00px;top:574.12px;font-size:9.9px;line-height:9.9px;font-weight:400;color:#333;letter-spacing:0.201px;">Pendente</div>
<div class="t" style="right:513.00px;top:572.79px;font-size:11px;line-height:11px;color:#76B82A"><span style="font-size:8.5px;font-weight:700;letter-spacing:-0.45px">R$</span><span style="font-weight:400;letter-spacing:0.118px;margin-left:2.8px">477,70</span></div>
<div style="position:absolute;left:993px;top:606.00px;width:417px;height:87px;background:#fff;border-radius:4px;box-shadow:0 1px 1px rgba(0,0,0,.3),0 0 1px rgba(0,0,0,.1);overflow:hidden"><div style="position:absolute;left:0;right:0;top:57px;bottom:0;background:#f8f8fc"></div></div>
<div style="position:absolute;left:1007.9px;top:620.7px;width:10px;height:10px;border:2px solid #575757;border-radius:2.5px"></div>
<div class="t" style="left:1034.70px;top:616.09px;font-size:11px;line-height:11px;font-weight:700;color:#1e1e1e;letter-spacing:-0.065px;">H DE S OLIVEIRA COME...</div>
<div class="t" style="left:1034.70px;top:630.82px;font-size:9.9px;line-height:9.9px;font-weight:400;color:#444;letter-spacing:-0.057px;">Ordem de serviço: 243</div>
<div style="position:absolute;left:1393.65px;top:622.15px;width:2.7px;height:2.7px;background:#4a4a4a;border-radius:50%"></div>
<div style="position:absolute;left:1393.65px;top:626.65px;width:2.7px;height:2.7px;background:#4a4a4a;border-radius:50%"></div>
<div style="position:absolute;left:1393.65px;top:631.15px;width:2.7px;height:2.7px;background:#4a4a4a;border-radius:50%"></div>
<div class="t" style="left:999.00px;top:645.65px;font-size:10.1px;line-height:10.1px;font-weight:400;color:#333;letter-spacing:-0.063px;">Próximo faturamento: 18/10</div>
<svg style="position:absolute;left:1007.8px;top:671.6px;" width="12" height="14" viewBox="0 0 12 14"><rect x="0.6" y="0.6" width="10.6" height="1.9" rx="0.6" fill="#F0C20C"/><path d="M1.6 2.4 H10.2 C10 4.5 8 6 5.9 7.6 C3.8 6 1.8 4.5 1.6 2.4 Z" fill="#F0C20C"/><path d="M5.9 7.4 C4 8.5 2.6 10 2.3 12.2 M5.9 7.4 C7.8 8.5 9.2 10 9.5 12.2" stroke="#F0C20C" stroke-width="1.2" fill="none"/><rect x="0.6" y="11.6" width="10.6" height="1.7" rx="0.5" fill="#F0C20C"/></svg>
<div class="t" style="left:1029.00px;top:673.12px;font-size:9.9px;line-height:9.9px;font-weight:400;color:#333;letter-spacing:0.201px;">Pendente</div>
<div class="t" style="right:513.00px;top:671.79px;font-size:11px;line-height:11px;color:#76B82A"><span style="font-size:8.5px;font-weight:700;letter-spacing:-0.45px">R$</span><span style="font-weight:400;letter-spacing:0.118px;margin-left:2.8px">477,70</span></div>
<div style="position:absolute;left:993px;top:705.00px;width:417px;height:87px;background:#fff;border-radius:4px;box-shadow:0 1px 1px rgba(0,0,0,.3),0 0 1px rgba(0,0,0,.1);overflow:hidden"><div style="position:absolute;left:0;right:0;top:57px;bottom:0;background:#f8f8fc"></div></div>
<div style="position:absolute;left:1007.9px;top:719.7px;width:10px;height:10px;border:2px solid #575757;border-radius:2.5px"></div>
<div class="t" style="left:1034.70px;top:715.09px;font-size:11px;line-height:11px;font-weight:700;color:#1e1e1e;letter-spacing:-0.065px;">H DE S OLIVEIRA COME...</div>
<div class="t" style="left:1034.70px;top:729.82px;font-size:9.9px;line-height:9.9px;font-weight:400;color:#444;letter-spacing:-0.057px;">Ordem de serviço: 242</div>
<div style="position:absolute;left:1393.65px;top:721.15px;width:2.7px;height:2.7px;background:#4a4a4a;border-radius:50%"></div>
<div style="position:absolute;left:1393.65px;top:725.65px;width:2.7px;height:2.7px;background:#4a4a4a;border-radius:50%"></div>
<div style="position:absolute;left:1393.65px;top:730.15px;width:2.7px;height:2.7px;background:#4a4a4a;border-radius:50%"></div>
<div class="t" style="left:999.00px;top:744.65px;font-size:10.1px;line-height:10.1px;font-weight:400;color:#333;letter-spacing:-0.063px;">Próximo faturamento: 18/10</div>
<svg style="position:absolute;left:1007.8px;top:770.6px;" width="12" height="14" viewBox="0 0 12 14"><rect x="0.6" y="0.6" width="10.6" height="1.9" rx="0.6" fill="#F0C20C"/><path d="M1.6 2.4 H10.2 C10 4.5 8 6 5.9 7.6 C3.8 6 1.8 4.5 1.6 2.4 Z" fill="#F0C20C"/><path d="M5.9 7.4 C4 8.5 2.6 10 2.3 12.2 M5.9 7.4 C7.8 8.5 9.2 10 9.5 12.2" stroke="#F0C20C" stroke-width="1.2" fill="none"/><rect x="0.6" y="11.6" width="10.6" height="1.7" rx="0.5" fill="#F0C20C"/></svg>
<div class="t" style="left:1029.00px;top:772.12px;font-size:9.9px;line-height:9.9px;font-weight:400;color:#333;letter-spacing:0.201px;">Pendente</div>
<div class="t" style="right:513.00px;top:770.79px;font-size:11px;line-height:11px;color:#76B82A"><span style="font-size:8.5px;font-weight:700;letter-spacing:-0.45px">R$</span><span style="font-weight:400;letter-spacing:0.118px;margin-left:2.8px">477,70</span></div>
<div style="position:absolute;left:993px;top:804.00px;width:417px;height:87px;background:#fff;border-radius:4px;box-shadow:0 1px 1px rgba(0,0,0,.3),0 0 1px rgba(0,0,0,.1);overflow:hidden"><div style="position:absolute;left:0;right:0;top:57px;bottom:0;background:#f8f8fc"></div></div>
<div style="position:absolute;left:1007.9px;top:818.7px;width:10px;height:10px;border:2px solid #575757;border-radius:2.5px"></div>
<div class="t" style="left:1034.70px;top:814.09px;font-size:11px;line-height:11px;font-weight:700;color:#1e1e1e;letter-spacing:-0.065px;">H DE S OLIVEIRA COME...</div>
<div class="t" style="left:1034.70px;top:828.82px;font-size:9.9px;line-height:9.9px;font-weight:400;color:#444;letter-spacing:-0.075px;">Ordem de serviço: </div>
<div style="position:absolute;left:1393.65px;top:820.15px;width:2.7px;height:2.7px;background:#4a4a4a;border-radius:50%"></div>
<div style="position:absolute;left:1393.65px;top:824.65px;width:2.7px;height:2.7px;background:#4a4a4a;border-radius:50%"></div>
<div style="position:absolute;left:1393.65px;top:829.15px;width:2.7px;height:2.7px;background:#4a4a4a;border-radius:50%"></div>
<div class="t" style="left:999.00px;top:843.65px;font-size:10.1px;line-height:10.1px;font-weight:400;color:#333;letter-spacing:1.126px;">Próximo faturamento: </div>
<svg style="position:absolute;left:1007.8px;top:869.6px;" width="12" height="14" viewBox="0 0 12 14"><rect x="0.6" y="0.6" width="10.6" height="1.9" rx="0.6" fill="#F0C20C"/><path d="M1.6 2.4 H10.2 C10 4.5 8 6 5.9 7.6 C3.8 6 1.8 4.5 1.6 2.4 Z" fill="#F0C20C"/><path d="M5.9 7.4 C4 8.5 2.6 10 2.3 12.2 M5.9 7.4 C7.8 8.5 9.2 10 9.5 12.2" stroke="#F0C20C" stroke-width="1.2" fill="none"/><rect x="0.6" y="11.6" width="10.6" height="1.7" rx="0.5" fill="#F0C20C"/></svg>
<div class="t" style="left:1029.00px;top:871.12px;font-size:9.9px;line-height:9.9px;font-weight:400;color:#333;letter-spacing:0.201px;">Pendente</div>
<div style="position:absolute;left:1464.5px;top:210.00px;width:416.5px;height:73.67px;background:#fff;border-radius:4px;box-shadow:0 1px 1px rgba(0,0,0,.3),0 0 1px rgba(0,0,0,.1);overflow:hidden"><div style="position:absolute;left:0;right:0;top:43.67px;bottom:0;background:#f8f8fc"></div></div>
<div style="position:absolute;left:1479.4px;top:224.7px;width:10px;height:10px;border:2px solid #575757;border-radius:2.5px"></div>
<div class="t" style="left:1506.20px;top:220.09px;font-size:11px;line-height:11px;font-weight:700;color:#1e1e1e;letter-spacing:0.054px;">Hellen Prestes Arauj...</div>
<div class="t" style="left:1506.20px;top:234.82px;font-size:9.9px;line-height:9.9px;font-weight:400;color:#444;letter-spacing:-0.057px;">Ordem de serviço: 748</div>
<div style="position:absolute;left:1864.65px;top:226.15px;width:2.7px;height:2.7px;background:#4a4a4a;border-radius:50%"></div>
<div style="position:absolute;left:1864.65px;top:230.65px;width:2.7px;height:2.7px;background:#4a4a4a;border-radius:50%"></div>
<div style="position:absolute;left:1864.65px;top:235.15px;width:2.7px;height:2.7px;background:#4a4a4a;border-radius:50%"></div>
<svg style="position:absolute;left:1479.0px;top:261.17px;" width="16" height="16" viewBox="0 0 16 16"><path d="M8.2 0.9 H3.2 Q1.2 0.9 1.2 2.9 V13.2 Q1.2 15.2 3.2 15.2 H8.5 M8.2 0.9 L12.6 5.3 V10.8 M8.2 0.9 V4.2 Q8.2 5.3 9.3 5.3 H12.6" stroke="#6CBD2A" stroke-width="1.3" fill="none" stroke-linejoin="round"/><text x="2.9" y="12.6" font-size="5.6" font-family="Liberation Sans" font-weight="700" fill="#6CBD2A" letter-spacing="-0.2">NF</text><path d="M9.6 13.4 L11.2 15 L14.6 11.6" stroke="#6CBD2A" stroke-width="1.3" fill="none"/></svg>
<div class="t" style="left:1500.50px;top:263.79px;font-size:9.9px;line-height:9.9px;font-weight:400;color:#333;letter-spacing:-0.026px;">Rec. emit.</div>
<div class="t" style="left:1550.70px;top:263.04px;font-size:9.6px;line-height:9.6px;font-weight:700;color:#1e1e1e;letter-spacing:0.146px;">- N° 89</div>
<div class="t" style="right:41.00px;top:262.46px;font-size:11px;line-height:11px;color:#76B82A"><span style="font-size:8.5px;font-weight:700;letter-spacing:-0.45px">R$</span><span style="font-weight:400;letter-spacing:-0.404px;margin-left:2.8px">123,48</span></div>
<div style="position:absolute;left:1464.5px;top:295.57px;width:416.5px;height:73.67px;background:#fff;border-radius:4px;box-shadow:0 1px 1px rgba(0,0,0,.3),0 0 1px rgba(0,0,0,.1);overflow:hidden"><div style="position:absolute;left:0;right:0;top:43.67px;bottom:0;background:#f8f8fc"></div></div>
<div style="position:absolute;left:1479.4px;top:310.27px;width:10px;height:10px;border:2px solid #575757;border-radius:2.5px"></div>
<div class="t" style="left:1506.20px;top:305.66px;font-size:11px;line-height:11px;font-weight:700;color:#1e1e1e;letter-spacing:0.054px;">Hellen Prestes Arauj...</div>
<div class="t" style="left:1506.20px;top:320.39px;font-size:9.9px;line-height:9.9px;font-weight:400;color:#444;letter-spacing:-0.057px;">Ordem de serviço: 746</div>
<div style="position:absolute;left:1864.65px;top:311.71999999999997px;width:2.7px;height:2.7px;background:#4a4a4a;border-radius:50%"></div>
<div style="position:absolute;left:1864.65px;top:316.21999999999997px;width:2.7px;height:2.7px;background:#4a4a4a;border-radius:50%"></div>
<div style="position:absolute;left:1864.65px;top:320.71999999999997px;width:2.7px;height:2.7px;background:#4a4a4a;border-radius:50%"></div>
<svg style="position:absolute;left:1479.0px;top:346.74px;" width="16" height="16" viewBox="0 0 16 16"><path d="M8.2 0.9 H3.2 Q1.2 0.9 1.2 2.9 V13.2 Q1.2 15.2 3.2 15.2 H8.5 M8.2 0.9 L12.6 5.3 V10.8 M8.2 0.9 V4.2 Q8.2 5.3 9.3 5.3 H12.6" stroke="#6CBD2A" stroke-width="1.3" fill="none" stroke-linejoin="round"/><text x="2.9" y="12.6" font-size="5.6" font-family="Liberation Sans" font-weight="700" fill="#6CBD2A" letter-spacing="-0.2">NF</text><path d="M9.6 13.4 L11.2 15 L14.6 11.6" stroke="#6CBD2A" stroke-width="1.3" fill="none"/></svg>
<div class="t" style="left:1500.50px;top:349.36px;font-size:9.9px;line-height:9.9px;font-weight:400;color:#333;letter-spacing:-0.026px;">Rec. emit.</div>
<div class="t" style="left:1550.70px;top:348.61px;font-size:9.6px;line-height:9.6px;font-weight:700;color:#1e1e1e;letter-spacing:0.146px;">- N° 86</div>
<div class="t" style="right:41.00px;top:348.03px;font-size:11px;line-height:11px;color:#76B82A"><span style="font-size:8.5px;font-weight:700;letter-spacing:-0.45px">R$</span><span style="font-weight:400;letter-spacing:-1.261px;margin-left:2.8px">1.111,32</span></div>
<div style="position:absolute;left:1464.5px;top:381.14px;width:416.5px;height:73.67px;background:#fff;border-radius:4px;box-shadow:0 1px 1px rgba(0,0,0,.3),0 0 1px rgba(0,0,0,.1);overflow:hidden"><div style="position:absolute;left:0;right:0;top:43.67px;bottom:0;background:#f8f8fc"></div></div>
<div style="position:absolute;left:1479.4px;top:395.84px;width:10px;height:10px;border:2px solid #575757;border-radius:2.5px"></div>
<div class="t" style="left:1506.20px;top:391.23px;font-size:11px;line-height:11px;font-weight:700;color:#1e1e1e;letter-spacing:0.054px;">Hellen Prestes Arauj...</div>
<div class="t" style="left:1506.20px;top:405.96px;font-size:9.9px;line-height:9.9px;font-weight:400;color:#444;letter-spacing:-0.057px;">Ordem de serviço: 745</div>
<div style="position:absolute;left:1864.65px;top:397.28999999999996px;width:2.7px;height:2.7px;background:#4a4a4a;border-radius:50%"></div>
<div style="position:absolute;left:1864.65px;top:401.78999999999996px;width:2.7px;height:2.7px;background:#4a4a4a;border-radius:50%"></div>
<div style="position:absolute;left:1864.65px;top:406.28999999999996px;width:2.7px;height:2.7px;background:#4a4a4a;border-radius:50%"></div>
<svg style="position:absolute;left:1479.0px;top:432.31px;" width="16" height="16" viewBox="0 0 16 16"><path d="M8.2 0.9 H3.2 Q1.2 0.9 1.2 2.9 V13.2 Q1.2 15.2 3.2 15.2 H8.5 M8.2 0.9 L12.6 5.3 V10.8 M8.2 0.9 V4.2 Q8.2 5.3 9.3 5.3 H12.6" stroke="#6CBD2A" stroke-width="1.3" fill="none" stroke-linejoin="round"/><text x="2.9" y="12.6" font-size="5.6" font-family="Liberation Sans" font-weight="700" fill="#6CBD2A" letter-spacing="-0.2">NF</text><path d="M9.6 13.4 L11.2 15 L14.6 11.6" stroke="#6CBD2A" stroke-width="1.3" fill="none"/></svg>
<div class="t" style="left:1500.50px;top:434.93px;font-size:9.9px;line-height:9.9px;font-weight:400;color:#333;letter-spacing:-0.026px;">Rec. emit.</div>
<div class="t" style="left:1550.70px;top:434.18px;font-size:9.6px;line-height:9.6px;font-weight:700;color:#1e1e1e;letter-spacing:0.146px;">- N° 85</div>
<div class="t" style="right:41.00px;top:433.60px;font-size:11px;line-height:11px;color:#76B82A"><span style="font-size:8.5px;font-weight:700;letter-spacing:-0.45px">R$</span><span style="font-weight:400;letter-spacing:-1.261px;margin-left:2.8px">1.111,32</span></div>
<div style="position:absolute;left:1464.5px;top:466.71px;width:416.5px;height:73.67px;background:#fff;border-radius:4px;box-shadow:0 1px 1px rgba(0,0,0,.3),0 0 1px rgba(0,0,0,.1);overflow:hidden"><div style="position:absolute;left:0;right:0;top:43.67px;bottom:0;background:#f8f8fc"></div></div>
<div style="position:absolute;left:1479.4px;top:481.40999999999997px;width:10px;height:10px;border:2px solid #575757;border-radius:2.5px"></div>
<div class="t" style="left:1506.20px;top:476.80px;font-size:11px;line-height:11px;font-weight:700;color:#1e1e1e;letter-spacing:0.098px;">Adalberto Taka - NÃO...</div>
<div class="t" style="left:1506.20px;top:491.53px;font-size:9.9px;line-height:9.9px;font-weight:400;color:#444;letter-spacing:-0.057px;">Ordem de serviço: 744</div>
<div style="position:absolute;left:1864.65px;top:482.85999999999996px;width:2.7px;height:2.7px;background:#4a4a4a;border-radius:50%"></div>
<div style="position:absolute;left:1864.65px;top:487.35999999999996px;width:2.7px;height:2.7px;background:#4a4a4a;border-radius:50%"></div>
<div style="position:absolute;left:1864.65px;top:491.85999999999996px;width:2.7px;height:2.7px;background:#4a4a4a;border-radius:50%"></div>
<svg style="position:absolute;left:1479.0px;top:517.88px;" width="16" height="16" viewBox="0 0 16 16"><path d="M8.2 0.9 H3.2 Q1.2 0.9 1.2 2.9 V13.2 Q1.2 15.2 3.2 15.2 H8.5 M8.2 0.9 L12.6 5.3 V10.8 M8.2 0.9 V4.2 Q8.2 5.3 9.3 5.3 H12.6" stroke="#6CBD2A" stroke-width="1.3" fill="none" stroke-linejoin="round"/><text x="2.9" y="12.6" font-size="5.6" font-family="Liberation Sans" font-weight="700" fill="#6CBD2A" letter-spacing="-0.2">NF</text><path d="M9.6 13.4 L11.2 15 L14.6 11.6" stroke="#6CBD2A" stroke-width="1.3" fill="none"/></svg>
<div class="t" style="left:1500.50px;top:520.50px;font-size:9.9px;line-height:9.9px;font-weight:400;color:#333;letter-spacing:-0.026px;">Rec. emit.</div>
<div class="t" style="left:1550.70px;top:519.75px;font-size:9.6px;line-height:9.6px;font-weight:700;color:#1e1e1e;letter-spacing:0.146px;">- N° 84</div>
<div class="t" style="right:41.00px;top:519.17px;font-size:11px;line-height:11px;color:#76B82A"><span style="font-size:8.5px;font-weight:700;letter-spacing:-0.45px">R$</span><span style="font-weight:400;letter-spacing:-0.291px;margin-left:2.8px">1.208,34</span></div>
<div style="position:absolute;left:1464.5px;top:552.28px;width:416.5px;height:73.67px;background:#fff;border-radius:4px;box-shadow:0 1px 1px rgba(0,0,0,.3),0 0 1px rgba(0,0,0,.1);overflow:hidden"><div style="position:absolute;left:0;right:0;top:43.67px;bottom:0;background:#f8f8fc"></div></div>
<div style="position:absolute;left:1479.4px;top:566.98px;width:10px;height:10px;border:2px solid #575757;border-radius:2.5px"></div>
<div class="t" style="left:1506.20px;top:562.37px;font-size:11px;line-height:11px;font-weight:700;color:#1e1e1e;letter-spacing:0.098px;">Adalberto Taka - NÃO...</div>
<div class="t" style="left:1506.20px;top:577.10px;font-size:9.9px;line-height:9.9px;font-weight:400;color:#444;letter-spacing:-0.057px;">Ordem de serviço: 743</div>
<div style="position:absolute;left:1864.65px;top:568.43px;width:2.7px;height:2.7px;background:#4a4a4a;border-radius:50%"></div>
<div style="position:absolute;left:1864.65px;top:572.93px;width:2.7px;height:2.7px;background:#4a4a4a;border-radius:50%"></div>
<div style="position:absolute;left:1864.65px;top:577.43px;width:2.7px;height:2.7px;background:#4a4a4a;border-radius:50%"></div>
<svg style="position:absolute;left:1479.0px;top:603.4499999999999px;" width="16" height="16" viewBox="0 0 16 16"><path d="M8.2 0.9 H3.2 Q1.2 0.9 1.2 2.9 V13.2 Q1.2 15.2 3.2 15.2 H8.5 M8.2 0.9 L12.6 5.3 V10.8 M8.2 0.9 V4.2 Q8.2 5.3 9.3 5.3 H12.6" stroke="#6CBD2A" stroke-width="1.3" fill="none" stroke-linejoin="round"/><text x="2.9" y="12.6" font-size="5.6" font-family="Liberation Sans" font-weight="700" fill="#6CBD2A" letter-spacing="-0.2">NF</text><path d="M9.6 13.4 L11.2 15 L14.6 11.6" stroke="#6CBD2A" stroke-width="1.3" fill="none"/></svg>
<div class="t" style="left:1500.50px;top:606.07px;font-size:9.9px;line-height:9.9px;font-weight:400;color:#333;letter-spacing:-0.026px;">Rec. emit.</div>
<div class="t" style="left:1550.70px;top:605.32px;font-size:9.6px;line-height:9.6px;font-weight:700;color:#1e1e1e;letter-spacing:0.146px;">- N° 83</div>
<div class="t" style="right:41.00px;top:604.74px;font-size:11px;line-height:11px;color:#76B82A"><span style="font-size:8.5px;font-weight:700;letter-spacing:-0.45px">R$</span><span style="font-weight:400;letter-spacing:-0.291px;margin-left:2.8px">1.230,88</span></div>
<div style="position:absolute;left:1464.5px;top:637.85px;width:416.5px;height:73.67px;background:#fff;border-radius:4px;box-shadow:0 1px 1px rgba(0,0,0,.3),0 0 1px rgba(0,0,0,.1);overflow:hidden"><div style="position:absolute;left:0;right:0;top:43.67px;bottom:0;background:#f8f8fc"></div></div>
<div style="position:absolute;left:1479.4px;top:652.55px;width:10px;height:10px;border:2px solid #575757;border-radius:2.5px"></div>
<div class="t" style="left:1506.20px;top:647.94px;font-size:11px;line-height:11px;font-weight:700;color:#1e1e1e;letter-spacing:0.054px;">Hellen Prestes Arauj...</div>
<div class="t" style="left:1506.20px;top:662.67px;font-size:9.9px;line-height:9.9px;font-weight:400;color:#444;letter-spacing:-0.057px;">Ordem de serviço: 742</div>
<div style="position:absolute;left:1864.65px;top:653.9999999999999px;width:2.7px;height:2.7px;background:#4a4a4a;border-radius:50%"></div>
<div style="position:absolute;left:1864.65px;top:658.4999999999999px;width:2.7px;height:2.7px;background:#4a4a4a;border-radius:50%"></div>
<div style="position:absolute;left:1864.65px;top:662.9999999999999px;width:2.7px;height:2.7px;background:#4a4a4a;border-radius:50%"></div>
<svg style="position:absolute;left:1476.5px;top:686.5199999999999px;" width="18" height="18" viewBox="0 0 18 18"><circle cx="9" cy="4.5" r="3" fill="#6a4fe0"/><path d="M2 11 C4 9 6 9.5 8.5 10 C9.5 10.2 10 11 9 11.3 L6.5 11.8 M8 11.3 L12 10.3 C14 9.5 15.5 9.8 15.8 10.3 L10.5 14 C9 15 6 14.6 4 14.2 L3 15.5 M2 11 L1 12 L3 15.5" stroke="#5b5cf0" stroke-width="1.1" fill="none" stroke-linejoin="round"/></svg>
<div class="t" style="left:1500.50px;top:691.64px;font-size:9.9px;line-height:9.9px;font-weight:400;color:#333;letter-spacing:-0.092px;">Em process.</div>
<div class="t" style="right:41.00px;top:690.31px;font-size:11px;line-height:11px;color:#76B82A"><span style="font-size:8.5px;font-weight:700;letter-spacing:-0.45px">R$</span><span style="font-weight:400;letter-spacing:-0.515px;margin-left:2.8px">10,00</span></div>
<div style="position:absolute;left:1464.5px;top:723.42px;width:416.5px;height:73.67px;background:#fff;border-radius:4px;box-shadow:0 1px 1px rgba(0,0,0,.3),0 0 1px rgba(0,0,0,.1);overflow:hidden"><div style="position:absolute;left:0;right:0;top:43.67px;bottom:0;background:#f8f8fc"></div></div>
<div style="position:absolute;left:1479.4px;top:738.12px;width:10px;height:10px;border:2px solid #575757;border-radius:2.5px"></div>
<div class="t" style="left:1506.20px;top:733.51px;font-size:11px;line-height:11px;font-weight:700;color:#1e1e1e;letter-spacing:0.098px;">Adalberto Taka - NÃO...</div>
<div class="t" style="left:1506.20px;top:748.24px;font-size:9.9px;line-height:9.9px;font-weight:400;color:#444;letter-spacing:-0.057px;">Ordem de serviço: 740</div>
<div style="position:absolute;left:1864.65px;top:739.5699999999999px;width:2.7px;height:2.7px;background:#4a4a4a;border-radius:50%"></div>
<div style="position:absolute;left:1864.65px;top:744.0699999999999px;width:2.7px;height:2.7px;background:#4a4a4a;border-radius:50%"></div>
<div style="position:absolute;left:1864.65px;top:748.5699999999999px;width:2.7px;height:2.7px;background:#4a4a4a;border-radius:50%"></div>
<svg style="position:absolute;left:1479.0px;top:774.5899999999999px;" width="16" height="16" viewBox="0 0 16 16"><path d="M8.2 0.9 H3.2 Q1.2 0.9 1.2 2.9 V13.2 Q1.2 15.2 3.2 15.2 H8.5 M8.2 0.9 L12.6 5.3 V10.8 M8.2 0.9 V4.2 Q8.2 5.3 9.3 5.3 H12.6" stroke="#6CBD2A" stroke-width="1.3" fill="none" stroke-linejoin="round"/><text x="2.9" y="12.6" font-size="5.6" font-family="Liberation Sans" font-weight="700" fill="#6CBD2A" letter-spacing="-0.2">NF</text><path d="M9.6 13.4 L11.2 15 L14.6 11.6" stroke="#6CBD2A" stroke-width="1.3" fill="none"/></svg>
<div class="t" style="left:1500.50px;top:777.21px;font-size:9.9px;line-height:9.9px;font-weight:400;color:#333;letter-spacing:-0.026px;">Rec. emit.</div>
<div class="t" style="left:1550.70px;top:776.46px;font-size:9.6px;line-height:9.6px;font-weight:700;color:#1e1e1e;letter-spacing:0.146px;">- N° 82</div>
<div class="t" style="right:41.00px;top:775.88px;font-size:11px;line-height:11px;color:#76B82A"><span style="font-size:8.5px;font-weight:700;letter-spacing:-0.45px">R$</span><span style="font-weight:400;letter-spacing:-0.682px;margin-left:2.8px">1.231,74</span></div>
<div style="position:absolute;left:1464.5px;top:808.99px;width:416.5px;height:73.67px;background:#fff;border-radius:4px;box-shadow:0 1px 1px rgba(0,0,0,.3),0 0 1px rgba(0,0,0,.1);overflow:hidden"><div style="position:absolute;left:0;right:0;top:43.67px;bottom:0;background:#f8f8fc"></div></div>
<div style="position:absolute;left:1479.4px;top:823.69px;width:10px;height:10px;border:2px solid #575757;border-radius:2.5px"></div>
<div class="t" style="left:1506.20px;top:819.08px;font-size:11px;line-height:11px;font-weight:700;color:#1e1e1e;letter-spacing:0.098px;">Adalberto Taka - NÃO...</div>
<div class="t" style="left:1506.20px;top:833.81px;font-size:9.9px;line-height:9.9px;font-weight:400;color:#444;letter-spacing:-0.057px;">Ordem de serviço: 739</div>
<div style="position:absolute;left:1864.65px;top:825.14px;width:2.7px;height:2.7px;background:#4a4a4a;border-radius:50%"></div>
<div style="position:absolute;left:1864.65px;top:829.64px;width:2.7px;height:2.7px;background:#4a4a4a;border-radius:50%"></div>
<div style="position:absolute;left:1864.65px;top:834.14px;width:2.7px;height:2.7px;background:#4a4a4a;border-radius:50%"></div>
<svg style="position:absolute;left:1479.0px;top:860.16px;" width="16" height="16" viewBox="0 0 16 16"><path d="M8.2 0.9 H3.2 Q1.2 0.9 1.2 2.9 V13.2 Q1.2 15.2 3.2 15.2 H8.5 M8.2 0.9 L12.6 5.3 V10.8 M8.2 0.9 V4.2 Q8.2 5.3 9.3 5.3 H12.6" stroke="#6CBD2A" stroke-width="1.3" fill="none" stroke-linejoin="round"/><text x="2.9" y="12.6" font-size="5.6" font-family="Liberation Sans" font-weight="700" fill="#6CBD2A" letter-spacing="-0.2">NF</text><path d="M9.6 13.4 L11.2 15 L14.6 11.6" stroke="#6CBD2A" stroke-width="1.3" fill="none"/></svg>
<div class="t" style="left:1500.50px;top:862.78px;font-size:9.9px;line-height:9.9px;font-weight:400;color:#333;letter-spacing:-0.026px;">Rec. emit.</div>
<div class="t" style="left:1550.70px;top:862.03px;font-size:9.6px;line-height:9.6px;font-weight:700;color:#1e1e1e;letter-spacing:0.146px;">- N° 81</div>
<div style="position:absolute;left:485px;top:198px;width:7px;height:621px;background:#fdfdfd"></div>
<div style="position:absolute;left:486px;top:199px;width:5px;height:177px;background:#b6b6bc;border-radius:3px"></div>
<div style="position:absolute;left:1422px;top:198px;width:7px;height:621px;background:#fdfdfd"></div>
<div style="position:absolute;left:1423px;top:199px;width:4.5px;height:202px;background:#b6b6bc;border-radius:3px"></div>
<div style="position:absolute;left:1892px;top:198px;width:8px;height:621px;background:#fdfdfd"></div>
<div style="position:absolute;left:1894px;top:199px;width:5px;height:22px;background:#b6b6bc;border-radius:3px"></div>
<div style="position:absolute;left:480px;top:466px;width:36px;height:33px;background:rgba(200,200,200,.75);border-radius:6px"></div>
<svg style="position:absolute;left:491px;top:476px;" width="14" height="12" viewBox="0 0 14 12"><path d="M1 6 H12 M7.5 1.5 L12 6 L7.5 10.5" stroke="#fff" stroke-width="1.2" fill="none"/></svg>
<div style="position:absolute;left:951px;top:466px;width:36px;height:33px;background:rgba(200,200,200,.75);border-radius:6px"></div>
<svg style="position:absolute;left:962px;top:476px;" width="14" height="12" viewBox="0 0 14 12"><path d="M1 6 H12 M7.5 1.5 L12 6 L7.5 10.5" stroke="#fff" stroke-width="1.2" fill="none"/></svg>
<div style="position:absolute;left:1422px;top:466px;width:36px;height:33px;background:rgba(200,200,200,.75);border-radius:6px"></div>
<svg style="position:absolute;left:1433px;top:476px;" width="14" height="12" viewBox="0 0 14 12"><path d="M1 6 H12 M7.5 1.5 L12 6 L7.5 10.5" stroke="#fff" stroke-width="1.2" fill="none"/></svg>
<div style="position:absolute;left:35px;top:819px;width:1877px;height:37px;background:#f3f3f3;border-top:1px solid #dcdcdc"></div>
<div class="t" style="left:59.00px;top:833.76px;font-size:10.8px;line-height:10.8px;font-weight:400;color:#444;letter-spacing:0.457px;">Total</div>
<div class="t" style="right:1442.50px;top:833.59px;font-size:11px;line-height:11px;font-weight:700;color:#1e1e1e"><span style="font-size:8.6px;letter-spacing:-0.5px">R$</span><span style="letter-spacing:0.163px;margin-left:3px">10.478,34</span></div>
<div class="t" style="left:528.00px;top:833.76px;font-size:10.8px;line-height:10.8px;font-weight:400;color:#444;letter-spacing:0.457px;">Total</div>
<div class="t" style="right:977.00px;top:833.59px;font-size:11px;line-height:11px;font-weight:700;color:#1e1e1e"><span style="font-size:8.6px;letter-spacing:-0.5px">R$</span><span style="letter-spacing:-0.227px;margin-left:3px">4.168,16</span></div>
<div class="t" style="left:999.00px;top:833.76px;font-size:10.8px;line-height:10.8px;font-weight:400;color:#444;letter-spacing:0.457px;">Total</div>
<div class="t" style="right:505.50px;top:833.59px;font-size:11px;line-height:11px;font-weight:700;color:#1e1e1e"><span style="font-size:8.6px;letter-spacing:-0.5px">R$</span><span style="letter-spacing:0.385px;margin-left:3px">8.049,59</span></div>
<div class="t" style="left:1470.60px;top:833.76px;font-size:10.8px;line-height:10.8px;font-weight:400;color:#444;letter-spacing:0.457px;">Total</div>
<div class="t" style="right:47.00px;top:833.59px;font-size:11px;line-height:11px;font-weight:700;color:#1e1e1e"><span style="font-size:8.6px;letter-spacing:-0.5px">R$</span><span style="letter-spacing:0.079px;margin-left:3px">165.373,</span></div>
<div style="position:absolute;left:1861px;top:809px;width:36px;height:36px;border-radius:50%;background:#5F6FC4"></div>
<svg style="position:absolute;left:1870px;top:817.5px;" width="18" height="19" viewBox="0 0 18 19"><path d="M4 0.5 H14 Q17.5 0.5 17.5 4 V18.5 L13.5 16 H4 Q0.5 16 0.5 12.5 V4 Q0.5 0.5 4 0.5 Z" fill="#fff"/><path d="M4.5 10.5 Q9 13.5 13.5 10.5" stroke="#5F6FC4" stroke-width="1.3" fill="none" stroke-linecap="round"/></svg>
<svg style="position:absolute;left:0;top:0;z-index:7" width="35" height="856" viewBox="0 0 35 856"><g fill="#c4c4c4"><rect x="9" y="20.5" width="14.5" height="2" rx="1"/><rect x="9" y="26" width="14.5" height="2" rx="1"/><rect x="9" y="31.5" width="14.5" height="2" rx="1"/><path d="M17 62 L10 68.5 H12 V75 H15.5 V71 H18.5 V75 H22 V68.5 H24 Z"/><path d="M10.2 104.2 H18.2 L22.2 108.2 V118 H10.2 Z"/><path d="M8 145.8 H11.5 L12.2 148 H24.8 L23.2 155.5 H13.5 L13.7 156.4 H23 V157.6 H12.6 L10.6 147.1 H8 Z"/><circle cx="13.8" cy="159.6" r="1.3"/><circle cx="21.8" cy="159.6" r="1.3"/><path d="M8 234.5 Q8 233.5 9 233.5 H12.5 V240.5 H9 Q8 240.5 8 239.5 Z"/><path d="M12.5 233.5 L20.5 229.8 V244.3 L12.5 240.5 Z"/><ellipse cx="21.2" cy="237" rx="2.6" ry="7.3"/><path d="M12.5 240.5 L15.5 241 L16.2 245.5 L14 245.2 Z"/><circle cx="16.5" cy="321.5" r="7"/><circle cx="16.5" cy="358.8" r="4"/><path d="M9 371.5 C9.5 366.5 12 364.8 16.5 364.8 C21 364.8 23.5 366.5 24 371.5 Z"/><path d="M10.5 398 H19 L22.5 401.5 V413 H10.5 Z"/><circle cx="13.8" cy="784.3" r="3.4"/><path d="M7.8 795 V792.6 Q7.8 788.6 13.6 788.6 Q17 788.6 18.8 789.6 L15.6 795 Z"/><path d="M16.4 795.2 L22.2 788 Q23 787.2 23.8 788 L24.4 788.6 Q25 789.4 24.3 790.2 L18.6 796 L16.2 796 Z"/></g><path d="M15.5 365 L16.5 366.5 L15.8 371.5 H17.2 L16.5 366.5 L17.5 365" stroke="#404040" stroke-width="0.8" fill="none"/><path d="M13 365.5 L14.5 371.5 M20 365.5 L18.5 371.5" stroke="#404040" stroke-width="0.8"/><path d="M19 398 V401.5 H22.5 Z" fill="#404040"/><path d="M18.2 104.2 V108.2 H22.2 Z" fill="#404040"/><path d="M16.2 110.6 V114.4 M14.3 112.5 H18.1" stroke="#404040" stroke-width="1.2"/><g fill="#c4c4c4"><path d="M8 198.8 L16.5 197.2 L23.8 198.2 L20.5 201.8 L11 202.8 L8 202 Z"/><ellipse cx="16" cy="195.5" rx="1.8" ry="0.9"/><ellipse cx="18.6" cy="192.6" rx="1.9" ry="0.8"/><ellipse cx="16.4" cy="189.2" rx="0.8" ry="1.4"/></g><path d="M13.5 824.2 H11.2 Q9.8 824.2 9.8 825.6 V835.6 Q9.8 837 11.2 837 H13.5" stroke="#c4c4c4" stroke-width="1.4" fill="none"/><path d="M14 830.5 H22 M19 827.5 L22 830.5 L19 833.5" stroke="#c4c4c4" stroke-width="1.4" fill="none"/><rect x="8" y="273.5" width="17" height="11.5" rx="2" fill="#fff"/><text x="10" y="283" font-size="9" font-weight="700" fill="#FF9600" font-family="Liberation Sans">$</text><rect x="15.5" y="277.2" width="7.5" height="1.2" fill="#FF9600"/><rect x="15.5" y="280.2" width="7.5" height="1.2" fill="#FF9600"/><text x="13.5" y="325.5" font-size="10" font-weight="700" fill="#404040" font-family="Liberation Sans">$</text></svg>
<svg style="position:absolute;left:1575px;top:0px" width="50" height="36" viewBox="1575 0 50 36"><defs><linearGradient id="lg1" x1="0" y1="0" x2="1" y2="0"><stop offset="0" stop-color="#7a2be0"/><stop offset="0.5" stop-color="#2b22a8"/><stop offset="1" stop-color="#1f5fd0"/></linearGradient></defs><path d="M1581,20 Q1583.5,11 1593,8.6" stroke="#f5a040" stroke-width="1.8" fill="none"/><path d="M1611,11.5 Q1619.5,12.5 1622,18.5" stroke="#90c848" stroke-width="1.6" fill="none"/><path d="M1589.5,16.5 Q1587,21 1592,24.2 Q1600,27.5 1611,24.5 Q1617.5,22.5 1617,18.5 Q1616,15.5 1611,14.5" stroke="url(#lg1)" stroke-width="4.4" fill="none"/><path d="M1589,18.5 Q1593,10.5 1610.5,3.8" stroke="#b330e6" stroke-width="4.4" fill="none"/><path d="M1598.5,20 Q1605,11.5 1615,16.5" stroke="#45aef0" stroke-width="3" fill="none"/><path d="M1603.2,3.5 L1605.2,12.2" stroke="#e0207a" stroke-width="3.2" fill="none"/><path d="M1606,16 C1610,21 1612.5,27 1602.5,30.5" stroke="#f7a028" stroke-width="2.8" fill="none"/></svg>
</body></html>
